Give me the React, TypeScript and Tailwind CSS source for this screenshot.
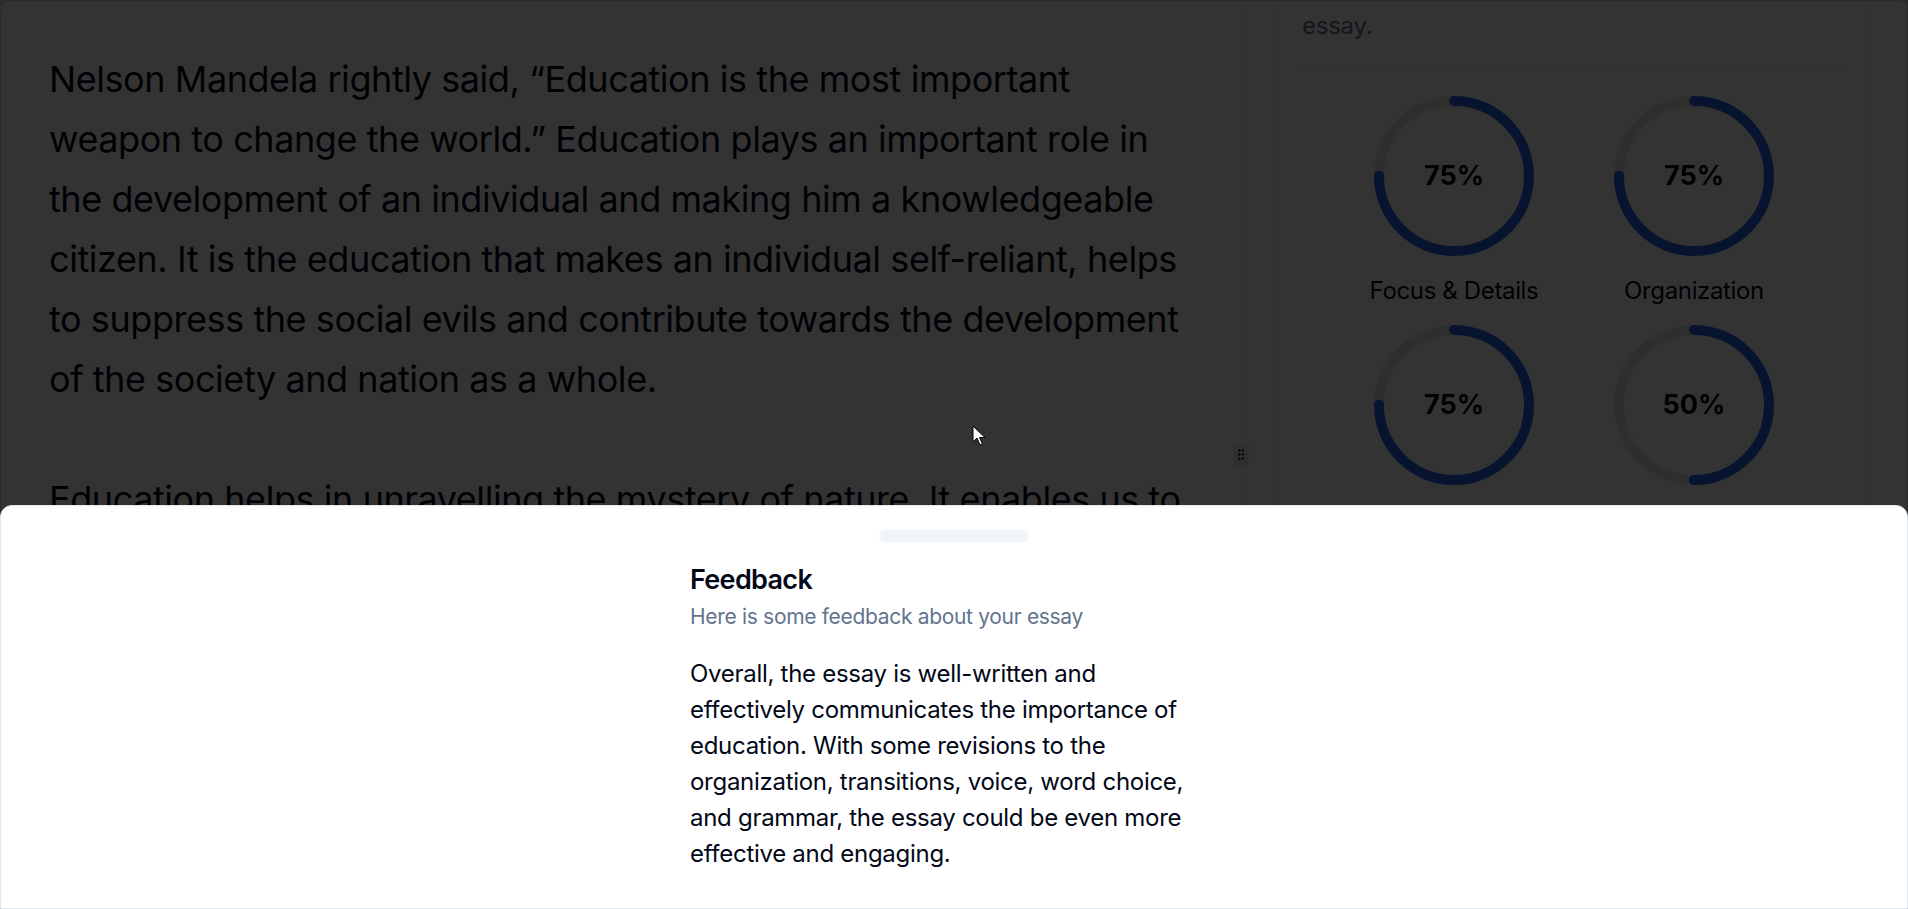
import { GripVertical } from 'lucide-react'

const essay = [
  'Nelson Mandela rightly said, \u201cEducation is the most important weapon to change the world.\u201d Education plays an important role in the development of an individual and making him a knowledgeable citizen. It is the education that makes an individual self-reliant, helps to suppress the social evils and contribute towards the development of the society and nation as a whole.',
  'Education helps in unravelling the mystery of nature. It enables us to understand the world around us, to think critically and to make wise decisions in our lives. An educated person is aware of his rights and duties and can contribute positively to society.',
]

const scores = [
  { label: 'Focus & Details', value: 75 },
  { label: 'Organization', value: 75 },
  { label: 'Voice', value: 75 },
  { label: 'Word Choice', value: 50 },
]

function Ring({ value }: { value: number }) {
  const r = 75
  const c = 2 * Math.PI * r
  return (
    <div className="relative w-[160px] h-[160px]">
      <svg width="160" height="160" viewBox="0 0 160 160" className="-rotate-90">
        <circle cx="80" cy="80" r={r} fill="none" stroke="#e5e7eb" strokeWidth="10" />
        <circle
          cx="80"
          cy="80"
          r={r}
          fill="none"
          stroke="#2563eb"
          strokeWidth="10"
          strokeLinecap="round"
          strokeDasharray={c}
          strokeDashoffset={c * (1 - value / 100)}
        />
      </svg>
      <div className="absolute inset-0 flex items-center justify-center text-[27px] font-bold text-[#020817]">
        {value}%
      </div>
    </div>
  )
}

export default function App() {
  return (
    <div
      className="relative h-screen w-full overflow-hidden bg-[#d4d4d8]"
      style={{ fontFamily: 'Inter, "Noto Sans", sans-serif' }}
    >
      <div className="flex h-full w-full overflow-hidden rounded-[10px] border border-slate-300 bg-white">
        {/* essay */}
        <div className="w-[1239px] shrink-0 p-[48px] text-[36px] leading-[60px] tracking-[-0.012em] text-[#020817]">
          {essay.map((p, i) => (
            <p key={i} className="mb-[60px]">
              {p}
            </p>
          ))}
        </div>

        {/* resize handle */}
        <div className="relative w-px shrink-0 bg-slate-200 flex items-center justify-center">
          <div className="z-10 flex h-[22px] w-[16px] items-center justify-center rounded-sm border border-slate-200 bg-slate-200">
            <GripVertical className="h-[15px] w-[15px] text-[#020817]" />
          </div>
        </div>

        {/* scores */}
        <div className="flex-1 px-[36px] overflow-hidden">
          <div className="rounded-b-lg border border-t-0 border-slate-200 px-[24px]">
            <p className="pt-[7px] text-[24px] leading-[36px] tracking-[-0.01em] text-slate-500">essay.</p>
            <div className="mt-[22px] h-px bg-slate-200" />
            <div className="mx-auto mt-[29px] grid w-[480px] grid-cols-2 gap-y-[16px]">
              {scores.map((s) => (
                <div key={s.label} className="flex flex-col items-center">
                  <Ring value={s.value} />
                  <p className="mt-[17px] text-[24px] leading-[36px] tracking-[-0.015em] text-[#020817]">
                    {s.label}
                  </p>
                </div>
              ))}
            </div>
          </div>
        </div>
      </div>

      {/* overlay */}
      <div className="absolute inset-0 z-40 bg-black/80" />

      {/* cursor */}
      <svg className="absolute left-[972px] top-[425px] z-40" width="14" height="22" viewBox="0 0 14 22">
        <path
          d="M1 1 L1 17 L5 13 L8 20 L10.5 19 L7.5 12.5 L13 12.5 Z"
          fill="white"
          stroke="black"
          strokeWidth="1"
        />
      </svg>

      {/* drawer */}
      <div className="absolute inset-x-0 bottom-0 top-[505px] z-50 flex flex-col rounded-t-[12px] border border-slate-200 bg-white">
        <div className="mx-auto mt-[24px] h-[12px] w-[150px] rounded-full bg-slate-100" />
        <div className="mx-auto w-full max-w-[576px]">
          <div className="grid gap-[9px] p-[24px]">
            <h2 className="text-[27px] font-semibold leading-none tracking-tight text-[#020817]">Feedback</h2>
            <p className="text-[21px] leading-[30px] tracking-[-0.015em] text-slate-500">
              Here is some feedback about your essay
            </p>
          </div>
          <div className="px-[24px]">
            <p className="max-w-[505px] text-[24px] leading-[36px] tracking-[-0.012em] text-[#020817]">
              Overall, the essay is well-written and effectively communicates the importance of education. With some
              revisions to the organization, transitions, voice, word choice, and grammar, the essay could be even
              more effective and engaging.
            </p>
          </div>
        </div>
      </div>
    </div>
  )
}
